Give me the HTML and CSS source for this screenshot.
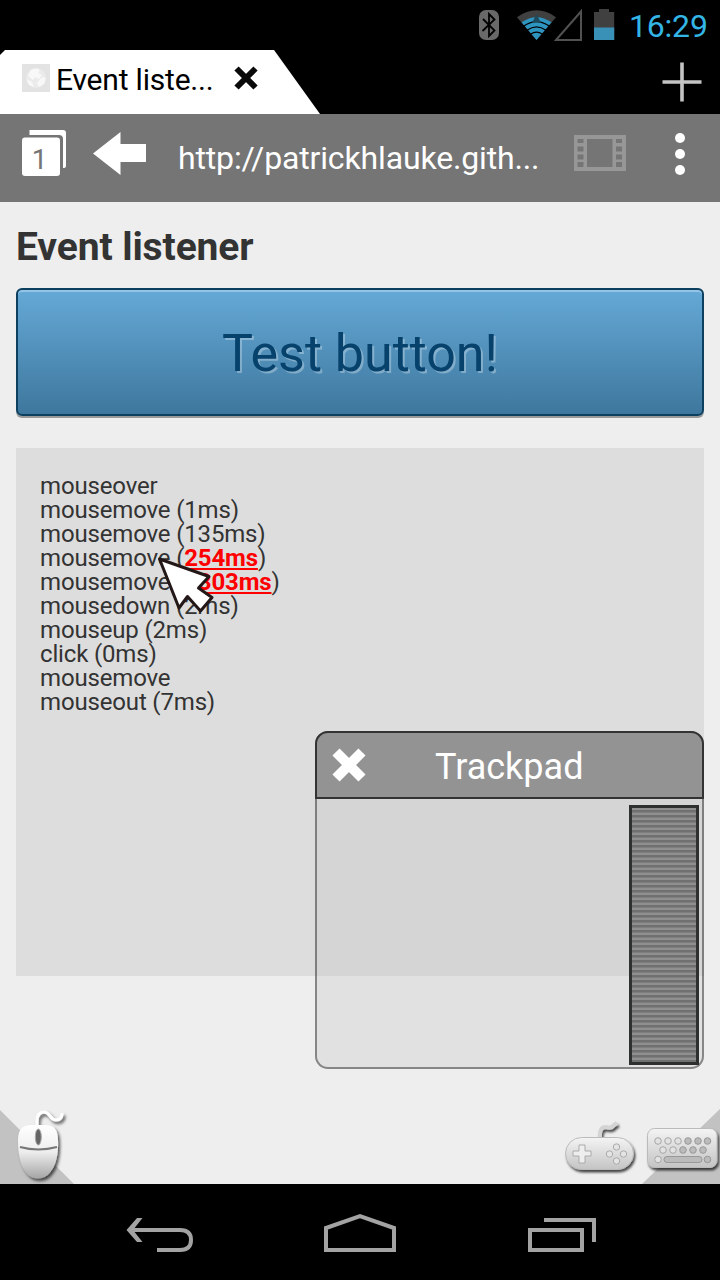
FILE: index.html
```html
<!DOCTYPE html>
<html lang="en">
<head>
<meta charset="utf-8">
<title>Event listener</title>
<link rel="stylesheet" href="styles.css">
</head>
<body>
<div class="screen">
  <header class="status">
    <svg class="status-icons" width="140" height="50" viewBox="478 0 140 50">
      <rect x="479" y="10" width="20" height="30" rx="7" fill="#696969"/>
      <path d="M483 19l11.500 11.500-5.500 5.500V14l5.500 5.500L482.500 31" fill="none" stroke="#000" stroke-width="1.800"/>
      <path d="M536.500 40L517 17.200Q536.500 3.500 556 17.200z" fill="#404040"/>
      <path d="M536.500 40L521.500 22.300Q536.500 12 551.500 22.300z" fill="#2e94c0"/>
      <g fill="none" stroke="#000" stroke-width="1.300"><path d="M523.500 26.300q13-9.500 26 0M527 30.300q9.500-7 19 0M530.500 34.200q6-4 12 0"/></g>
      <path d="M536.500 14l-4.500 9q4.500-1.500 9 0z" fill="#1e4a5d"/>
      <path d="M556 40L581 11.500V40z" fill="none" stroke="#515151" stroke-width="2"/>
      <path d="M594 12h5V9h10v3h5.200v28H594z" fill="#404040"/>
      <path d="M594 27.500h20.200V40H594z" fill="#3a91b8"/>
    </svg>
    <span class="clock">16:29</span>
  </header>
  <div class="tabs">
    <div class="tab">
      <svg class="favicon" width="28" height="28" viewBox="0 0 28 28"><path d="M0 0h28v28H0z" fill="#e3e3e3"/><circle cx="14" cy="14" r="10" fill="#ebebeb"/><path d="M9 6q5-3 9 0l-2 3 4 2-3 4-4-2-2 3-5-4zM20 13l4 1-2 6-5 3-2-4zM5 15l5 3 2 5-5-2z" fill="#f8f8f8"/></svg>
      <span class="tab-title">Event liste...</span>
      <svg class="tab-close" width="26" height="26" viewBox="0 0 26 26"><path d="M3.500 3.500l19 19M22.500 3.500l-19 19" stroke="#0a0a0a" stroke-width="6"/></svg>
    </div>
    <svg class="plus" width="40" height="40" viewBox="0 0 40 40"><path d="M.5 20h39M20 .5v39" stroke="#c4c4c4" stroke-width="3.600"/></svg>
  </div>
  <div class="toolbar">
    <div class="count">
      <svg width="46" height="48" viewBox="0 0 46 48"><path d="M7.500 0H41q3 0 3 3v33q0 2-3 2V9q0-4-4-4H7.500z" fill="#fff"/><rect x="0" y="7.500" width="38" height="38.500" rx="3" fill="#fff"/></svg>
      <span class="count-number">1</span>
    </div>
    <svg class="back" width="53" height="43" viewBox="0 0 53 43"><path d="M0 21.500L27.500 0v12H53v18H27.500v13z" fill="#fff"/></svg>
    <span class="url">http://patrickhlauke.gith...</span>
    <svg class="film" width="52" height="36" viewBox="0 0 52 36"><path fill="#979797" fill-rule="evenodd" d="M0 0h52v36H0zM13 4v28h25.500V4zM3.500 4v4h6V4zm0 7.500v5h6v-5zm0 8v5h6v-5zm0 7.500v5h6v-5zM42 4v4h6V4zm0 7.500v5h6v-5zm0 8v5h6v-5zm0 7.500v5h6v-5z"/></svg>
    <svg class="more" width="12" height="44" viewBox="0 0 12 44" fill="#fff"><circle cx="6" cy="6" r="5"/><circle cx="6" cy="22" r="5"/><circle cx="6" cy="38" r="5"/></svg>
  </div>
  <main class="page">
    <h1 class="heading">Event listener</h1>
    <button class="test-button"><span class="button-label">Test button!</span></button>
    <div class="log">
      <div>mouseover</div>
      <div>mousemove (1ms)</div>
      <div>mousemove (135ms)</div>
      <div>mousemove (<b class="slow">254ms</b>)</div>
      <div>mousemove (<b class="slow">1303ms</b>)</div>
      <div>mousedown (2ms)</div>
      <div>mouseup (2ms)</div>
      <div>click (0ms)</div>
      <div>mousemove</div>
      <div>mouseout (7ms)</div>
    </div>
    <svg class="pointer" width="60" height="62" viewBox="0 0 60 62"><path d="M2.500 3L22 52 30.500 40.500 43.500 55 55 41.500 41.500 32 52 20.500z" fill="#fff" stroke="#231718" stroke-width="3" stroke-linejoin="round"/></svg>
    <section class="trackpad">
      <div class="pad-head">
        <svg class="pad-close" width="36" height="36" viewBox="0 0 36 36"><path d="M5 5l26 26M31 5L5 31" stroke="#fff" stroke-width="10"/></svg>
        <span class="pad-title">Trackpad</span>
      </div>
      <div class="pad-body"><div class="scroll-strip"></div></div>
    </section>
    <svg class="corner-left" width="80" height="78" viewBox="0 1106 80 78">
      <defs>
        <linearGradient id="body" x2="0" y2="1"><stop offset="0" stop-color="#fff"/><stop offset=".5" stop-color="#eee"/><stop offset="1" stop-color="#a5a5a5"/></linearGradient>
        <filter id="shade" x="-30%" y="-30%" width="160%" height="160%"><feDropShadow dx="2" dy="2.500" stdDeviation="1.700" flood-color="#000" flood-opacity=".65"/></filter>
      </defs>
      <path d="M0 1110l74 74H0z" fill="#c2c2c2"/>
      <g filter="url(#shade)">
        <path d="M37 1126v-5q0-9 7-9c6 0 6 8 12 8q6 0 6-7" fill="none" stroke="#fff" stroke-width="3"/>
        <path d="M18 1140q0-15 13-15h15q12 0 12 15c1 21-6 38.500-20 38.500s-20-17.500-20-38.500z" fill="url(#body)"/>
      </g>
      <ellipse cx="38.300" cy="1137" rx="3" ry="8" fill="#656565" stroke="#aaa"/>
      <path d="M20 1147q18 5 37 0" fill="none" stroke="#777" stroke-width="2"/>
    </svg>
    <svg class="corner-right" width="160" height="78" viewBox="560 1106 160 78">
      <defs>
        <linearGradient id="metal" x2="0" y2="1"><stop offset="0" stop-color="#f4f4f4"/><stop offset="1" stop-color="#c4c4c4"/></linearGradient>
        <filter id="lift" x="-20%" y="-30%" width="140%" height="170%"><feDropShadow dx="1.500" dy="2.500" stdDeviation="1.300" flood-color="#000" flood-opacity=".7"/></filter>
      </defs>
      <path d="M720 1109v75h-78z" fill="#c2c2c2"/>
      <g filter="url(#lift)">
        <path d="M600 1138v-4q0-7 6-7 5 2 8-2l3-2" fill="none" stroke="#d4d4d4" stroke-width="4"/>
        <rect x="565.500" y="1137.500" width="68" height="32" rx="16" fill="url(#metal)" stroke="#bbb"/>
        <rect x="647.500" y="1128.500" width="69.500" height="39" rx="7" fill="url(#metal)" stroke="#bbb"/>
      </g>
      <path d="M579 1145h6v6h6v5h-6v7h-6v-7h-6v-5h6z" fill="#eee" stroke="#aaa"/>
      <g fill="#e4e4e4" stroke="#aaa"><circle cx="616.500" cy="1147" r="3.200"/><circle cx="609.500" cy="1154" r="3.200"/><circle cx="623.500" cy="1154" r="3.200"/><circle cx="616.500" cy="1161" r="3.200"/></g>
      <g fill="#e2e2e2" stroke="#a6a6a6"><circle cx="658" cy="1141" r="3.300"/><circle cx="668" cy="1141" r="3.300"/><circle cx="678" cy="1141" r="3.300"/><circle cx="663" cy="1150" r="3.300"/><circle cx="673" cy="1150" r="3.300"/><circle cx="658" cy="1159.500" r="3.300"/></g>
      <g fill="#bbb" stroke="#999"><circle cx="688" cy="1141" r="3.300"/><circle cx="698" cy="1141" r="3.300"/><circle cx="707.500" cy="1141" r="3.300"/><circle cx="683" cy="1150" r="3.300"/><circle cx="693" cy="1150" r="3.300"/><circle cx="703" cy="1150" r="3.300"/><circle cx="707.500" cy="1159.500" r="3.300"/><rect x="664" y="1156.500" width="38" height="6" rx="3"/></g>
    </svg>
  </main>
  <nav class="system-nav">
    <svg width="520" height="90" viewBox="0 0 520 90" fill="none" stroke="#a3a3a3" stroke-width="4">
      <path d="M57 60h23q11 0 11-10 0-10-11-10H30"/>
      <path d="M37 28h5.500L33 40l9.500 12H37L26.500 40z" fill="#a3a3a3" stroke="none"/>
      <path d="M226 60V38l34-12 34 12v22z"/>
      <path d="M430 40h52v20h-52zM444 30h50v22"/>
    </svg>
  </nav>
</div>
</body>
</html>
```

FILE: styles.css
```css
* { box-sizing: border-box; }
body { margin: 0; background: #000; font-family: Roboto, "Noto Sans", sans-serif; }
svg { display: block; flex: none; }
.screen { width: 720px; height: 1280px; display: flex; flex-direction: column; overflow: hidden; }
.status { height: 50px; display: flex; justify-content: flex-end; align-items: center; padding-right: 13px; gap: 11px; color: #33b5e5; }
.clock { font-size: 32px; line-height: 50px; width: 78px; letter-spacing: -0.2px; padding-top: 1px; white-space: nowrap; }
.tabs { height: 64px; display: flex; justify-content: space-between; }
.tab { width: 320px; height: 64px; padding-left: 22px; display: flex; align-items: center; padding-bottom: 7px; background: #fff; clip-path: polygon(0 5px, 5px 0, 274px 0, 100% 100%, 0 100%); color: #000; }
.favicon { margin-top: -2px; }
.tab-title { width: 158px; margin: 1px 0 0 6px; font-size: 30px; letter-spacing: -0.2px; white-space: nowrap; }
.tab-close { margin: -1px 0 0 19px; }
.plus { margin: 12px 18px 0 0; }
.toolbar { height: 88px; background: #757575; display: flex; padding-left: 22px; color: #fff; }
.count { width: 46px; height: 48px; margin-top: 16px; display: grid; }
.count > svg, .count-number { grid-area: 1 / 1; }
.count-number { color: #757575; font-size: 28px; line-height: 59px; width: 35px; text-align: center; }
.back { margin: 18px 0 0 25px; }
.url { width: 363px; margin: 0 0 0 32px; font-size: 32px; line-height: 88px; letter-spacing: -0.15px; white-space: nowrap; }
.film { margin: 21px 0 0 33px; }
.more { margin: 18px 0 0 48px; }
.page { position: relative; height: 982px; background: #eee; padding: 21px 16px 0; color: #333; }
.heading { margin: 0; font-size: 39px; line-height: 48px; font-weight: 700; letter-spacing: -0.1px; white-space: nowrap; }
.test-button { display: block; width: 688px; height: 128px; margin: 17px 0 32px; padding: 4px 0 0; border: 2px solid #0d3f5f; border-radius: 6px; background: linear-gradient(#65a9d7, #3e779d); box-shadow: inset 0 2px 0 #96c4e7, 0 2px 0 #999; font: 52px/120px Roboto, sans-serif; color: #06426c; text-shadow: 2px 2px 0 rgba(255,255,255,.3); }
.log { height: 528px; padding: 26px 24px 0; background: #ddd; font-size: 24px; line-height: 24px; letter-spacing: -0.16px; white-space: nowrap; }
.slow { color: red; text-decoration: underline; text-underline-offset: 2px; text-decoration-thickness: 2px; }
.pointer { position: absolute; left: 157px; top: 354px; }
.trackpad { position: absolute; left: 315px; top: 529px; width: 389px; height: 338px; border-radius: 13px; border: 2px solid rgba(65,65,65,.6); background: rgba(195,195,195,.3); background-clip: padding-box; }
.pad-head { height: 68px; margin: -2px -2px 0; border: 2px solid #333; border-radius: 13px 13px 0 0; background: #939393; display: flex; align-items: center; padding-left: 14px; color: #fff; }
.pad-title { margin: 4px 0 0 68px; font-size: 36px; white-space: nowrap; }
.pad-body { display: flex; justify-content: flex-end; padding: 6px 3px 0 0; }
.scroll-strip { width: 70px; height: 260px; border: 3px solid #2d302f; background: repeating-linear-gradient(#8f8f8f 0 2px, #707070 2px 4px, #7e7e7e 4px 5px); }
.corner-left { position: absolute; left: 0; bottom: 0; }
.corner-right { position: absolute; right: 0; bottom: 0; }
.system-nav { height: 96px; padding: 6px 0 0 100px; background: #000; }
```
